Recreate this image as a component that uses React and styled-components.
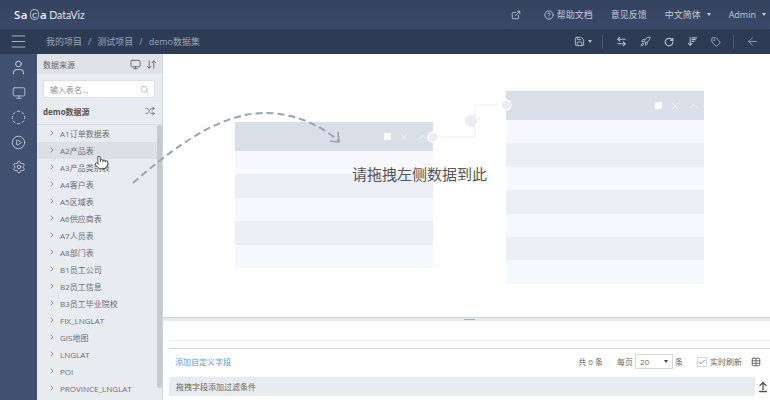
import React from "react";
import styled, { createGlobalStyle } from "styled-components";
import {
  Menu, User, Monitor, CircleDashed, CirclePlay, Settings, ExternalLink, CircleHelp,
  Save, ArrowLeftRight, Rocket, RotateCw, ArrowDownWideNarrow, Tag, ArrowLeft,
  Search, Shuffle, ArrowDownUp, ChevronRight, X, ChevronUp, Check, Table, ArrowUpFromLine,
  Pointer,
} from "lucide-react";

const GlobalStyle = createGlobalStyle`
  html, body { margin: 0; padding: 0; height: 400px; overflow: hidden; background: #fff; }
  body { font-family: "Open Sans", "Noto Sans CJK SC", sans-serif; }
`;

const tables = [
  "A1订单数据表", "A2产品表", "A3产品类别表", "A4客户表", "A5区域表", "A6供应商表", "A7人员表", "A8部门表",
  "B1员工公司", "B2员工信息", "B3员工毕业院校", "FIX_LNGLAT", "GIS地图", "LNGLAT", "POI", "PROVINCE_LNGLAT",
];

function Caret() {
  return <CaretMark />;
}

function SheetCard({ left, top, rows }) {
  const items = [];
  for (let i = 0; i < rows; i++) {
    items.push(<SheetRow key={i} $dark={i % 2 === 1} />);
  }
  return (
    <Sheet $left={left} $top={top}>
      <SheetHead>
        <WhiteSquare />
        <X size={10} color="#f4f6fa" />
        <ChevronUp size={12} color="#f4f6fa" />
      </SheetHead>
      {items}
    </Sheet>
  );
}

function App() {
  return (
    <Page>
      <GlobalStyle />
      <TopBar>
        <Logo>
          <b>Sa</b><LogoMark>C</LogoMark><b>a</b><span>DataViz</span>
        </Logo>
        <TopNav>
          <TopIcon><ExternalLink size={10} /></TopIcon>
          <TopLink><CircleHelp size={10} />帮助文档</TopLink>
          <TopLink>意见反馈</TopLink>
          <TopLink>中文简体<Caret /></TopLink>
          <TopLink>Admin<Caret /></TopLink>
        </TopNav>
      </TopBar>
      <SubBar>
        <MenuSlot><Menu size={19} strokeWidth={1.2} /></MenuSlot>
        <Crumbs>
          <span>我的项目</span><i>/</i><span>测试项目</span><i>/</i><span>demo数据集</span>
        </Crumbs>
        <Tools>
          <SaveItem><Save size={11} /><Caret /></SaveItem>
          <Divider />
          <ToolItem><ArrowLeftRight size={11} strokeWidth={2.4} /></ToolItem>
          <ToolItem><Rocket size={11} /></ToolItem>
          <ToolItem><RotateCw size={10} strokeWidth={3} /></ToolItem>
          <ToolItem><ArrowDownWideNarrow size={11} strokeWidth={2.4} /></ToolItem>
          <ToolItem><Tag size={10} /></ToolItem>
          <Divider $tight />
          <ToolItem><ArrowLeft size={13} strokeWidth={1.3} /></ToolItem>
        </Tools>
      </SubBar>
      <Body>
        <Rail>
          <User size={17} strokeWidth={1.4} />
          <Monitor size={14} strokeWidth={1.4} />
          <CircleDashed size={15} strokeWidth={1.5} />
          <CirclePlay size={15} strokeWidth={1.4} />
          <Settings size={14} strokeWidth={1.5} />
        </Rail>
        <Panel>
          <PanelHead>
            <span>数据来源</span>
            <PanelIcons>
              <Monitor size={11} />
              <ArrowDownUp size={11} />
            </PanelIcons>
          </PanelHead>
          <SearchBox>
            <span>输入表名...</span>
            <Search size={9} color="#aab0b8" />
          </SearchBox>
          <SourceRow>
            <b>demo数据源</b>
            <Shuffle size={10} color="#666" />
          </SourceRow>
          <TableList>
            {tables.map((name, i) => (
              <TableRow key={name} $active={i === 1}>
                <ChevronRight size={8} strokeWidth={2.4} color="#777" />
                <span>{name}</span>
              </TableRow>
            ))}
            <Scroll />
          </TableList>
        </Panel>
        <Main>
          <Canvas>
            <SheetCard left={72} top={68} rows={5} />
            <SheetCard left={343} top={37} rows={7} />
            <Wire width="400" height="110" viewBox="0 0 400 110">
              <path d="M270 83 H312 V51 H343" fill="none" stroke="#eef1f6" strokeWidth="1" />
              <circle cx="270" cy="83" r="5" fill="#e8edf3" stroke="#fff" strokeWidth="1.4" />
              <circle cx="343" cy="51" r="5" fill="#e8edf3" stroke="#fff" strokeWidth="1.4" />
              <circle cx="311" cy="67" r="6" fill="#fff" stroke="#f0f2f6" />
              <circle cx="308" cy="67" r="6" fill="#e9edf3" />
            </Wire>
            <DropHint>请拖拽左侧数据到此</DropHint>
          </Canvas>
          <Splitter><span /></Splitter>
          <Spacer />
          <Footer>
            <AddLink>添加自定义字段</AddLink>
            <Pager>
              <span>共 0 条</span>
              <PageSize>
                每页
                <SelectBox>20<em /></SelectBox>
                条
              </PageSize>
              <Live><CheckMark><Check size={8} strokeWidth={3} color="#5a9bd5" /></CheckMark>实时刷新</Live>
              <SheetIcon><Table size={10} color="#555" /></SheetIcon>
            </Pager>
          </Footer>
          <FilterRow>
            <FilterBar>拖拽字段添加过滤条件</FilterBar>
            <ArrowUpFromLine size={12} strokeWidth={2.6} color="#555" />
          </FilterRow>
        </Main>
      </Body>
      <DragArrow width="240" height="100" viewBox="0 0 240 100">
        <path d="M2 83 C45 45 92 12 135 13 C160 13 185 22 208 41" fill="none" stroke="#98a3b4" strokeWidth="2" strokeDasharray="7 4" />
        <path d="M199 41 L208 42 L207 32" fill="none" stroke="#98a3b4" strokeWidth="1.6" />
      </DragArrow>
      <Cursor><Pointer size={15} fill="#fff" color="#222" strokeWidth={1.3} /></Cursor>
    </Page>
  );
}

export default App;

const Page = styled.div`
  position: relative;
  width: 770px;
  height: 400px;
  overflow: hidden;
  display: flex;
  flex-direction: column;
  font-size: 8px;
  color: #555;
`;

const TopBar = styled.div`
  height: 29px;
  flex: none;
  background: linear-gradient(#34435f, #3a4a68);
  display: flex;
  align-items: center;
  justify-content: space-between;
  padding: 0 4px 0 14px;
  color: #c4cbd8;
`;

const Logo = styled.div`
  font-size: 11.5px;
  color: #f2f4f8;
  display: flex;
  align-items: center;
  b { font-weight: 600; letter-spacing: 0.5px; }
  span { margin-left: 2px; font-family: "Lato", sans-serif; font-size: 10.5px; color: #dfe4ec; }
`;

const LogoMark = styled.i`
  font-style: normal;
  font-size: 8px;
  width: 9px;
  height: 11px;
  margin: 0 1px 0 2px;
  line-height: 10px;
  text-align: center;
  border: 1px solid #aab4c4;
  border-radius: 4px;
  box-sizing: border-box;
`;

const TopNav = styled.div`
  display: flex;
  align-items: center;
  gap: 18px;
`;

const TopIcon = styled.div`
  display: flex;
  margin-right: 5px;
`;

const TopLink = styled.div`
  display: flex;
  align-items: center;
  gap: 3px;
  white-space: nowrap;
  font-size: 9px;
`;

const CaretMark = styled.i`
  display: inline-block;
  width: 0;
  height: 0;
  margin-left: 3px;
  border-left: 2.5px solid transparent;
  border-right: 2.5px solid transparent;
  border-top: 3px solid currentColor;
`;

const SubBar = styled.div`
  height: 25px;
  flex: none;
  background: #2e3b55;
  display: flex;
  align-items: center;
  color: #b8c0ce;
`;

const MenuSlot = styled.div`
  width: 37px;
  display: flex;
  justify-content: center;
  color: #aeb7c6;
`;

const Crumbs = styled.div`
  margin-left: 9px;
  display: flex;
  gap: 6px;
  font-size: 9px;
  color: #9aa5b8;
  i { font-style: normal; }
`;

const Tools = styled.div`
  margin-left: auto;
  display: flex;
  align-items: center;
  gap: 13px;
  padding-right: 11px;
`;

const ToolItem = styled.div`
  display: flex;
  align-items: center;
`;

const SaveItem = styled(ToolItem)`
  margin-right: -3px;
`;

const Divider = styled.div`
  width: 1px;
  height: 14px;
  background: #4c5a70;
  margin: 0 ${(p) => (p.$tight ? "-1px" : "0")};
`;

const Body = styled.div`
  flex: 1;
  display: flex;
  min-height: 0;
`;

const Rail = styled.div`
  width: 37px;
  flex: none;
  background: #3f5070;
  color: #c9d0dc;
  display: flex;
  flex-direction: column;
  align-items: center;
  gap: 10px;
  padding-top: 5px;
  box-sizing: border-box;
`;

const Panel = styled.div`
  width: 126px;
  flex: none;
  background: #e8ebf0;
  border-right: 1px solid #cfd6df;
  box-sizing: border-box;
  display: flex;
  flex-direction: column;
`;

const PanelHead = styled.div`
  height: 20px;
  flex: none;
  background: #dfe2e7;
  display: flex;
  align-items: center;
  justify-content: space-between;
  padding: 0 5px 0 6px;
  color: #666;
`;

const PanelIcons = styled.div`
  display: flex;
  gap: 5px;
  color: #666;
`;

const SearchBox = styled.div`
  height: 18px;
  margin: 6px 7px 0 6px;
  flex: none;
  background: #fff;
  border: 1px solid #dde1e6;
  box-sizing: border-box;
  display: flex;
  align-items: center;
  justify-content: space-between;
  padding: 0 5px 0 6px;
  color: #8b8f96;
`;

const SourceRow = styled.div`
  height: 26px;
  flex: none;
  border-bottom: 1px solid #dce0e6;
  display: flex;
  align-items: center;
  justify-content: space-between;
  padding: 0 7px 0 6px;
  color: #555;
  b { font-weight: 700; }
`;

const TableList = styled.div`
  position: relative;
`;

const TableRow = styled.div`
  height: 17.05px;
  margin-top: -0.06px;
  display: flex;
  align-items: center;
  gap: 4px;
  padding-left: 11px;
  color: #6a6e75;
  background: ${(p) => (p.$active ? "#dcdfe4" : "transparent")};
`;

const Scroll = styled.div`
  position: absolute;
  right: 0;
  top: 0;
  width: 5px;
  height: 263px;
  background: #c6cacf;
  border-radius: 2px;
`;

const Main = styled.div`
  flex: 1;
  display: flex;
  flex-direction: column;
  min-width: 0;
`;

const Canvas = styled.div`
  position: relative;
  height: 263px;
  flex: none;
  background: #fff;
  overflow: hidden;
`;

const Sheet = styled.div`
  position: absolute;
  left: ${(p) => p.$left}px;
  top: ${(p) => p.$top}px;
  width: 198px;
`;

const SheetHead = styled.div`
  height: 29px;
  background: #d8dfe8;
  display: flex;
  align-items: center;
  justify-content: flex-end;
  gap: 8px;
  padding-right: 4px;
  box-sizing: border-box;
`;

const WhiteSquare = styled.div`
  width: 7px;
  height: 7px;
  background: #fff;
`;

const SheetRow = styled.div`
  height: 23.4px;
  background: ${(p) => (p.$dark ? "#ebeef4" : "#f6f8fd")};
`;

const Wire = styled.svg`
  position: absolute;
  left: 0;
  top: 0;
  overflow: visible;
`;

const DropHint = styled.div`
  position: absolute;
  left: 189px;
  top: 109px;
  font-size: 15px;
  color: #555;
  white-space: nowrap;
`;

const Splitter = styled.div`
  height: 4px;
  flex: none;
  background: #e6e9ee;
  border-top: 1px solid #cfd4dc;
  box-sizing: border-box;
  display: flex;
  justify-content: center;
  align-items: center;
  span {
    width: 11px;
    height: 1px;
    margin-left: 5px;
    background: #9fb0c4;
  }
`;

const Spacer = styled.div`
  height: 20px;
  flex: none;
  margin: 0 0 0 6px;
  border-bottom: 1px solid #eef1f3;
  box-sizing: border-box;
`;

const Footer = styled.div`
  height: 29px;
  flex: none;
  margin: 7px 0 0 6px;
  border-top: 1px solid #d4d9df;
  box-sizing: border-box;
  display: flex;
  align-items: center;
  justify-content: space-between;
  padding: 0 9px 3px 6px;
`;

const AddLink = styled.div`
  color: #5b9bd5;
`;

const Pager = styled.div`
  display: flex;
  align-items: center;
  gap: 14px;
  color: #666;
`;

const PageSize = styled.div`
  display: flex;
  align-items: center;
  gap: 2px;
`;

const SelectBox = styled.div`
  width: 38px;
  height: 15px;
  flex: none;
  border: 1px solid #d4d9e0;
  box-sizing: border-box;
  display: flex;
  align-items: center;
  justify-content: space-between;
  padding: 0 4px;
  em {
    width: 0;
    height: 0;
    border-left: 2px solid transparent;
    border-right: 2px solid transparent;
    border-top: 3px solid #444;
  }
`;

const Live = styled.div`
  display: flex;
  align-items: center;
  gap: 3px;
`;

const SheetIcon = styled.div`
  display: flex;
  margin-left: -5px;
`;

const CheckMark = styled.div`
  width: 10px;
  height: 10px;
  border: 1px solid #cfd6e0;
  box-sizing: border-box;
  display: flex;
  align-items: center;
  justify-content: center;
`;

const FilterRow = styled.div`
  display: flex;
  align-items: center;
  gap: 2px;
  margin-left: 6px;
  padding-right: 1px;
`;

const FilterBar = styled.div`
  flex: 1;
  height: 19px;
  background: #e8ebf0;
  display: flex;
  align-items: center;
  padding-left: 7px;
  color: #666;
`;

const DragArrow = styled.svg`
  position: absolute;
  left: 131px;
  top: 100px;
  overflow: visible;
`;

const Cursor = styled.div`
  position: absolute;
  left: 94px;
  top: 155px;
`;
